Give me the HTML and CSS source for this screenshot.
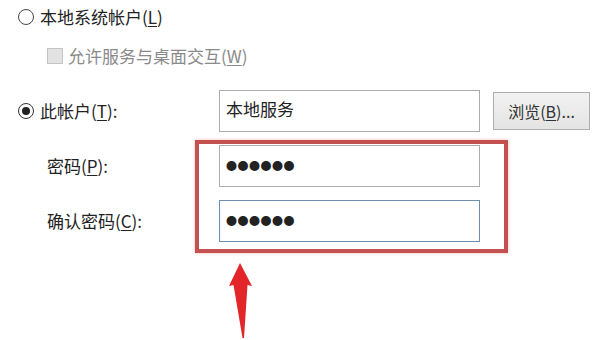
FILE: index.html
```html
<!DOCTYPE html>
<html lang="zh-CN">
<head>
    <meta charset="UTF-8">
    <title>登录</title>
    <link rel="stylesheet" href="styles.css">
</head>
<body>

<div class="form">
    <div class="row row-local">
        <span class="radio"></span>
        <span class="label">本地系统帐户(<u>L</u>)</span>
    </div>

    <div class="row row-check">
        <span class="checkbox"></span>
        <span class="label disabled">允许服务与桌面交互(<u>W</u>)</span>
    </div>

    <div class="grid">
        <div class="cell">
            <span class="radio checked"></span>
            <span class="label">此帐户(<u>T</u>):</span>
        </div>
        <div class="input">本地服务</div>
        <div class="button">浏览(<u>B</u>)...</div>

        <div class="cell indent">
            <span class="label">密码(<u>P</u>):</span>
        </div>
        <div class="input dots">●●●●●●</div>
        <div></div>

        <div class="cell indent">
            <span class="label">确认密码(<u>C</u>):</span>
        </div>
        <div class="input dots focus">●●●●●●</div>
        <div></div>
    </div>

    <!-- 红框标注 -->
    <div class="highlight"></div>

    <svg class="arrow" width="36" height="80" viewBox="0 0 36 80">
        <path d="M15 3 L27 26 L22.5 25 L19 78 L17.5 78 L8.5 25 L4 26 Z" fill="#e3262a"/>
    </svg>
</div>

</body>
</html>
```

FILE: styles.css
```css
* {
    margin: 0;
    padding: 0;
    box-sizing: border-box;
}

body {
    background: #fff;
    font-family: "Noto Sans CJK SC", "Noto Sans", sans-serif;
    font-size: 17px;
    color: #222;
    width: 600px;
    height: 340px;
    overflow: hidden;
}

.form {
    position: relative;
    padding-left: 18px;
    height: 340px;
}

u {
    text-decoration: underline;
    text-underline-offset: 2px;
}

.row {
    display: flex;
    align-items: center;
}

.row-local {
    height: 34px;
}

.row-check {
    height: 44px;
    padding-left: 29px;
}

.label {
    line-height: 20px;
}

.disabled {
    color: #8a8a8a;
}

.radio {
    width: 16px;
    height: 16px;
    border: 1.5px solid #444;
    border-radius: 50%;
    margin-right: 6px;
    display: flex;
    align-items: center;
    justify-content: center;
    flex-shrink: 0;
}

.radio.checked {
    border-color: #333;
}

.radio.checked::after {
    content: "";
    width: 8px;
    height: 8px;
    border-radius: 50%;
    background: #222;
}

.checkbox {
    width: 16px;
    height: 16px;
    border: 1px solid #c4c4c4;
    background: #e2e2e2;
    margin-right: 5px;
}

.grid {
    display: grid;
    grid-template-columns: 188px 261px 97px;
    grid-template-rows: 42px 42px 42px;
    column-gap: 13px;
    row-gap: 13px;
    margin-top: 12px;
}

.cell {
    display: flex;
    align-items: center;
}

.cell.indent {
    padding-left: 29px;
}

.input {
    border: 1px solid #abadb3;
    background: #fff;
    padding: 7px 0 0 6px;
    line-height: 22px;
}

.input.dots {
    font-size: 11px;
    letter-spacing: 0.5px;
    padding-top: 8px;
    padding-left: 6px;
}

.input.focus {
    border-color: #6f8fae;
}

.button {
    height: 38px;
    margin-top: 2px;
    border: 1px solid #adadad;
    background: linear-gradient(#f2f2f2, #e4e4e4);
    display: flex;
    align-items: center;
    justify-content: center;
    font-size: 16px;
    color: #333;
}

.highlight {
    position: absolute;
    left: 195px;
    top: 140px;
    width: 313px;
    height: 113px;
    border: 4px solid #c4514f;
    box-shadow: 0 0 3px rgba(230, 120, 120, 0.5);
}

.arrow {
    position: absolute;
    left: 225px;
    top: 260px;
}
```
